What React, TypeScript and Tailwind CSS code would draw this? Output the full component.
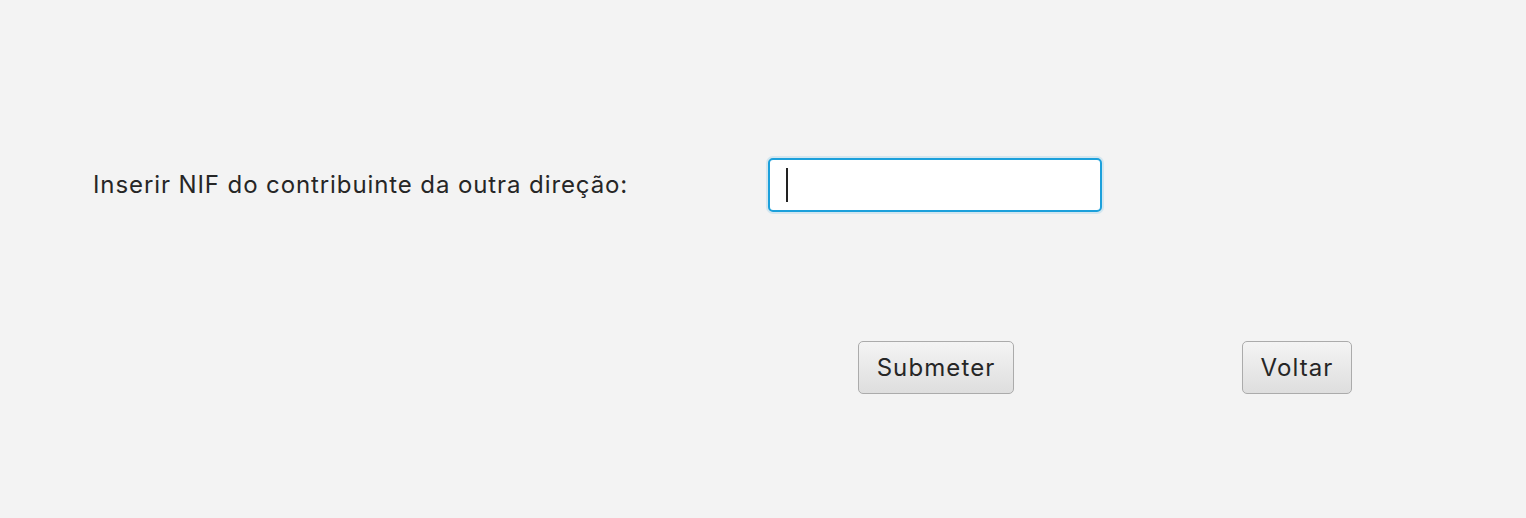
export default function App() {
  return (
    <div
      className="w-[1526px] h-[518px] bg-[#f3f3f3] text-[#262626] flex flex-col"
      style={{ fontFamily: 'Inter, "Liberation Sans", Arial, sans-serif' }}
    >
      <div className="flex items-center pl-[93px] pt-[158px] h-[212px]">
        <div className="w-[675px] text-[24px] leading-[28px] tracking-[0.9px]">
          Inserir NIF do contribuinte da outra direção:
        </div>
        <div className="w-[334px] h-[54px] rounded-[5px] border-2 border-[#1ba0db] bg-white shadow-[0_0_0_2px_#d3e6ef] flex items-center pl-[16px]">
          <div className="w-[2px] h-[34px] bg-[#222]" />
        </div>
      </div>
      <div className="flex pl-[858px] pt-[129px] gap-[228px]">
        <button className="w-[156px] h-[53px] rounded-[5px] border border-[#ababab] bg-gradient-to-b from-[#f4f4f4] to-[#dedede] text-[24px] tracking-[1.1px] text-[#262626]">
          Submeter
        </button>
        <button className="w-[110px] h-[53px] rounded-[5px] border border-[#ababab] bg-gradient-to-b from-[#f4f4f4] to-[#dedede] text-[24px] tracking-[1.1px] text-[#262626]">
          Voltar
        </button>
      </div>
    </div>
  );
}
